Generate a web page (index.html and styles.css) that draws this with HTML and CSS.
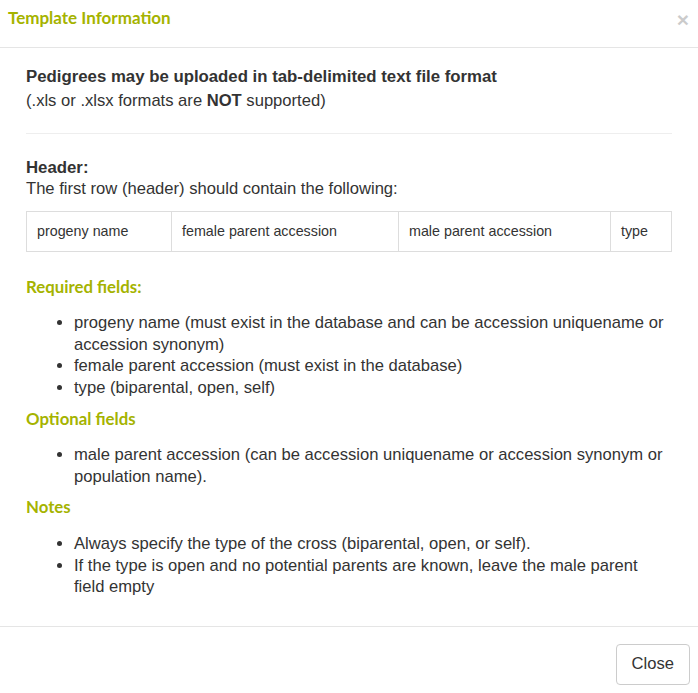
FILE: index.html
```html
<!DOCTYPE html>
<html>
<head>
<meta charset="utf-8">
<link rel="stylesheet" href="styles.css">
</head>
<body>
<div class="modal">
  <div class="modal-header">
    <h4 class="modal-title">Template Information</h4>
    <span class="close">&times;</span>
  </div>
  <div class="modal-body">
    <p class="lead"><b class="lead-title">Pedigrees may be uploaded in tab-delimited text file format</b><br>(.xls or .xlsx formats are <b>NOT</b> supported)</p>
    <hr class="rule">
    <p class="header-label"><b>Header:</b><br>The first row (header) should contain the following:</p>
    <table class="tpl">
      <tr>
        <td class="c1">progeny name</td>
        <td class="c2">female parent accession</td>
        <td class="c3">male parent accession</td>
        <td class="c4">type</td>
      </tr>
    </table>
    <h5 class="section">Required fields:</h5>
    <ul class="items">
      <li>progeny name (must exist in the database and can be accession uniquename or accession synonym)</li>
      <li>female parent accession (must exist in the database)</li>
      <li>type (biparental, open, self)</li>
    </ul>
    <h5 class="section">Optional fields</h5>
    <ul class="items">
      <li>male parent accession (can be accession uniquename or accession synonym or population name).</li>
    </ul>
    <h5 class="section notes">Notes</h5>
    <ul class="items">
      <li>Always specify the type of the cross (biparental, open, or self).</li>
      <li>If the type is open and no potential parents are known, leave the male parent field empty</li>
    </ul>
  </div>
  <div class="modal-footer">
    <button class="btn">Close</button>
  </div>
</div>
</body>
</html>
```

FILE: styles.css
```css
html, body {
  margin: 0;
  padding: 0;
  background: #fff;
}
body {
  font-family: "Liberation Sans", Arial, sans-serif;
  font-size: 16.6px;
  line-height: 21.5px;
  color: #333;
}
.modal {
  width: 698px;
}
.modal-header {
  height: 48px;
  box-sizing: border-box;
  border-bottom: 1px solid #e5e5e5;
  display: flex;
  justify-content: space-between;
  align-items: flex-start;
  padding: 6px 9px 0 8px;
}
.modal-title {
  margin: 0;
  font-family: Lato, sans-serif;
  font-weight: 700;
  font-size: 17px;
  line-height: 24px;
  color: #a5b300;
}
.close {
  font-family: "Liberation Sans", Arial, sans-serif;
  font-size: 21px;
  font-weight: 700;
  line-height: 1;
  color: #000;
  opacity: 0.2;
  margin-top: 3px;
}
.modal-body {
  padding: 17px 26px 12px 26px;
}
.lead {
  margin: 0;
  line-height: 24px;
}
.lead-title {
  font-size: 16.8px;
}
.rule {
  border: 0;
  border-top: 1px solid #eee;
  margin: 20px 0 23px;
}
.header-label {
  margin: 0;
  line-height: 21px;
}
.header-label b {
  font-size: 16.8px;
}
.tpl {
  margin-top: 12px;
  width: 100%;
  border-collapse: collapse;
}
.tpl td {
  border: 1px solid #ddd;
  padding: 9px 10px 10px;
  font-size: 14.3px;
  line-height: 20px;
  color: #333;
}
.c1 { width: 124px; }
.c2 { width: 206px; }
.c3 { width: 191px; }
.section {
  margin: 24px 0 0;
  font-family: Lato, sans-serif;
  font-weight: 700;
  font-size: 16.8px;
  line-height: 22px;
  color: #a5b300;
}
.items {
  margin: 14px 0 0;
  padding-left: 48px;
}
.items + .section {
  margin-top: 10px;
}
.items + .notes {
  margin-top: 9px;
}
.notes + .items {
  margin-top: 15px;
}
.modal-footer {
  border-top: 1px solid #e5e5e5;
  margin-top: 16px;
  padding: 17px 8px 8px;
  display: flex;
  justify-content: flex-end;
}
.btn {
  font-family: "Liberation Sans", Arial, sans-serif;
  font-size: 16.6px;
  color: #333;
  background: #fff;
  border: 1px solid #ccc;
  border-radius: 4px;
  height: 41px;
  padding: 0 15px;
}
```
